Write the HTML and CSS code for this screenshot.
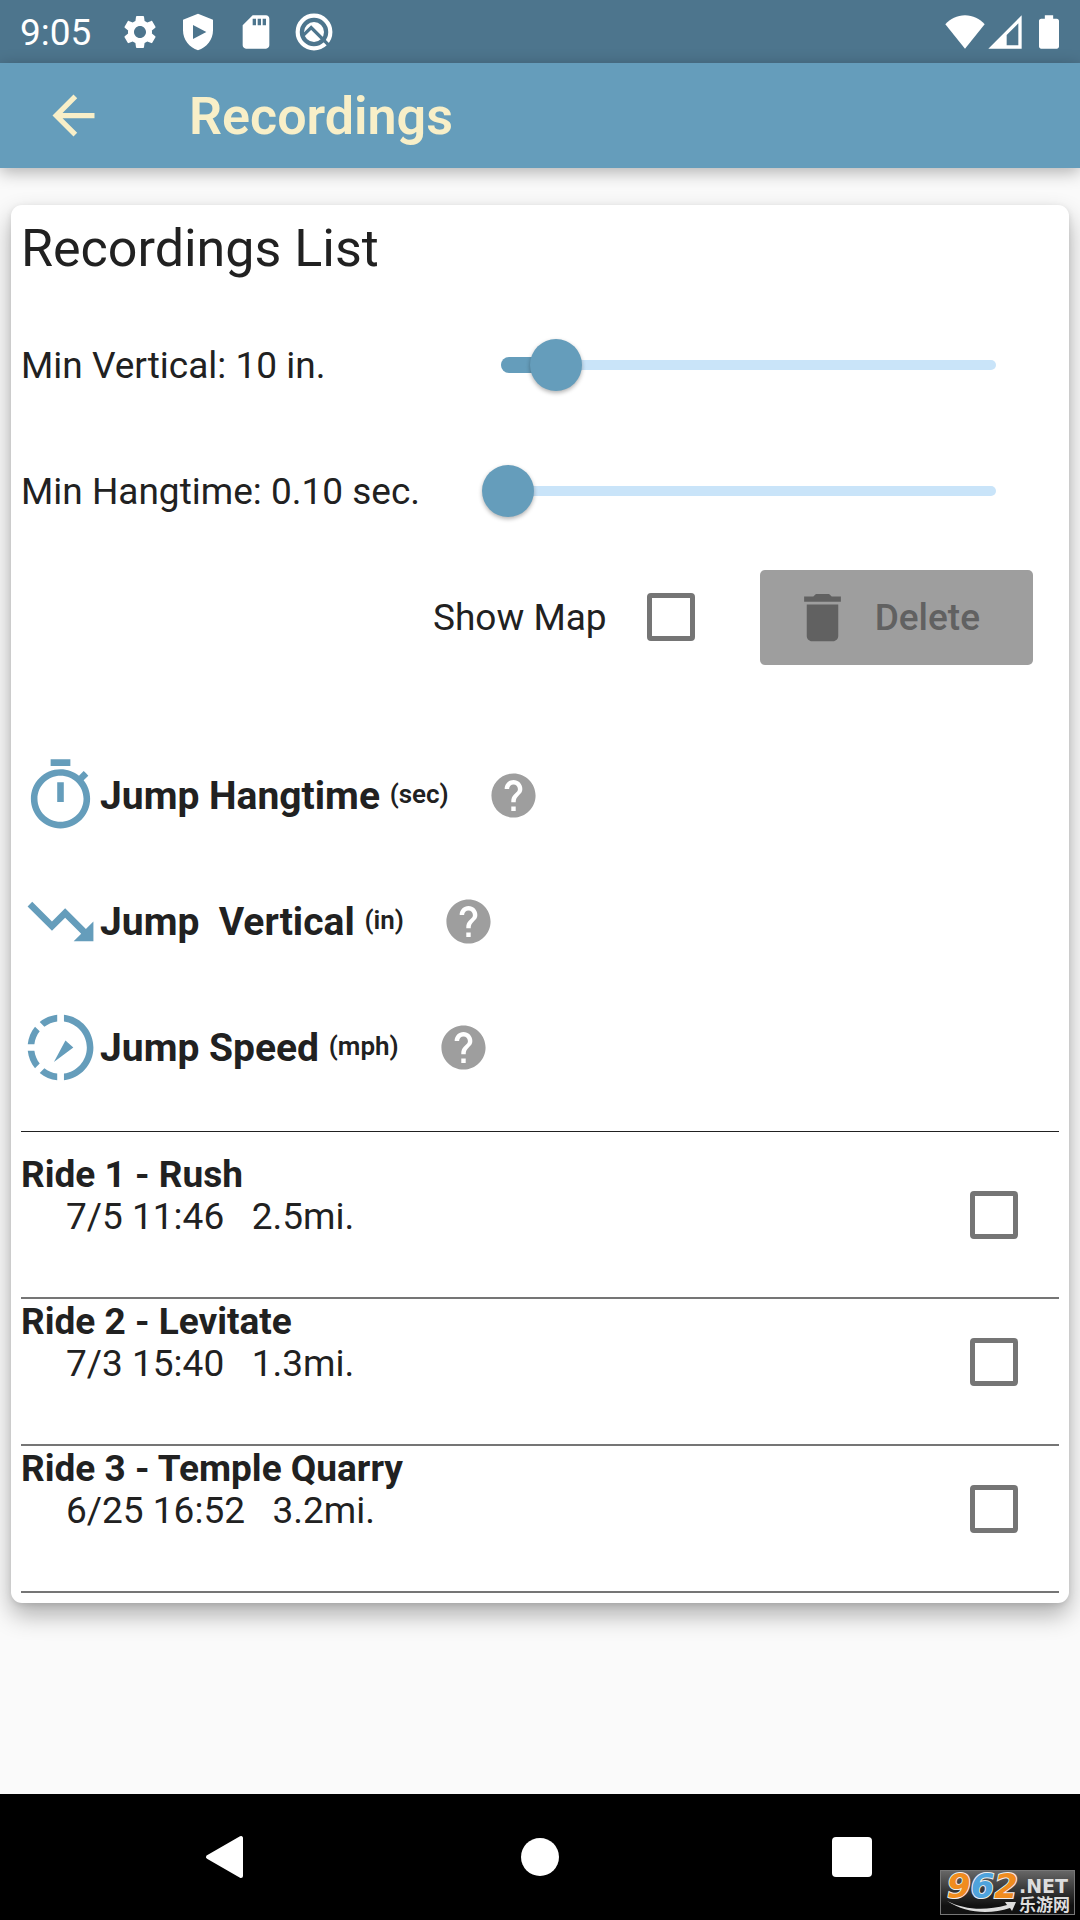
FILE: index.html
```html
<!DOCTYPE html>
<html lang="en">
<head>
    <meta charset="utf-8">
    <meta name="viewport" content="width=device-width, initial-scale=1">
    <title>Recordings</title>
    <link rel="stylesheet" href="styles.css">
</head>
<body>
    <div class="status-bar">
        <span class="clock">9:05</span>
        <div class="status-icons">
            <svg class="status-icon" viewBox="0 0 24 24"><path d="M19.14 12.94c.04-.3.06-.61.06-.94 0-.32-.02-.64-.07-.94l2.03-1.58c.18-.14.23-.41.12-.61l-1.92-3.32c-.12-.22-.37-.29-.59-.22l-2.39.96c-.5-.38-1.03-.7-1.62-.94l-.36-2.54c-.04-.24-.24-.41-.48-.41h-3.84c-.24 0-.43.17-.47.41l-.36 2.54c-.59.24-1.13.57-1.62.94l-2.39-.96c-.22-.08-.47 0-.59.22L2.74 8.87c-.12.21-.08.47.12.61l2.03 1.58c-.05.3-.09.63-.09.94s.02.64.07.94l-2.03 1.58c-.18.14-.23.41-.12.61l1.92 3.32c.12.22.37.29.59.22l2.39-.96c.5.38 1.03.7 1.62.94l.36 2.54c.05.24.24.41.48.41h3.84c.24 0 .44-.17.47-.41l.36-2.54c.59-.24 1.13-.56 1.62-.94l2.39.96c.22.08.47 0 .59-.22l1.92-3.32c.12-.22.07-.47-.12-.61l-2.01-1.58zM12 15.6c-1.98 0-3.6-1.62-3.6-3.6s1.62-3.6 3.6-3.6 3.6 1.62 3.6 3.6-1.62 3.6-3.6 3.6z"/></svg>
            <svg class="status-icon" viewBox="0 0 24 24"><path fill-rule="evenodd" d="M12 1L3 4.600V11c0 5.600 3.800 10.300 9 12 5.200-1.700 9-6.400 9-12V4.600zM9 7.800L17 12l-8 4.200z"/></svg>
            <svg class="status-icon" viewBox="0 0 24 24"><path d="M18 2h-8L4 8v12c0 1.100.9 2 2 2h12c1.100 0 2-.9 2-2V4c0-1.100-.9-2-2-2zm-6 6h-2V4h2v4zm3 0h-2V4h2v4zm3 0h-2V4h2v4z"/></svg>
            <svg class="status-icon" viewBox="0 0 24 24"><circle class="ring" cx="12" cy="12" r="9.800"/><circle cx="12" cy="12" r="6"/><path class="cut" d="M5.500 14l4.800-4.700L21 20"/></svg>
        </div>
        <div class="signal-icons">
            <svg class="status-icon" viewBox="0 0 24 24"><path d="M12 22L.2 7.400C3.200 4.100 7.200 2 12 2s8.800 2.100 11.800 5.400z"/></svg>
            <svg class="status-icon" viewBox="0 0 24 24"><path fill-rule="evenodd" d="M2 22L22 2v20zM13 20h7V6.800l-7 7z"/></svg>
            <svg class="status-icon battery" viewBox="0 0 24 24"><path d="M16.700 4H14.500V2h-5v2H7.300C6.600 4 6 4.600 6 5.330v15.330C6 21.400 6.600 22 7.300 22h9.400c.7 0 1.300-.6 1.300-1.330V5.330C18 4.600 17.400 4 16.700 4z"/></svg>
        </div>
    </div>

    <header class="app-bar">
        <button class="back-btn" aria-label="Back">
            <svg viewBox="0 0 24 24"><path d="M20 11H7.830l5.590-5.590L12 4l-8 8 8 8 1.410-1.410L7.830 13H20v-2z"/></svg>
        </button>
        <h1 class="title">Recordings</h1>
    </header>

    <main class="content">
        <section class="card">
            <h2 class="card-title">Recordings List</h2>

            <div class="slider-row">
                <label for="minVertical">Min Vertical: 10 in.</label>
                <div class="slider">
                    <div class="slider-track"></div>
                    <div class="slider-fill" style="width: 10%"></div>
                    <input type="range" id="minVertical" min="0" max="100" value="10">
                </div>
            </div>
            <div class="slider-row">
                <label for="minHangtime">Min Hangtime: 0.10 sec.</label>
                <div class="slider">
                    <div class="slider-track"></div>
                    <div class="slider-fill" style="width: 0%"></div>
                    <input type="range" id="minHangtime" min="0.1" max="5" step="0.1" value="0.1">
                </div>
            </div>

            <div class="actions">
                <label for="showMap">Show Map</label>
                <input type="checkbox" class="checkbox" id="showMap">
                <button class="delete-btn" disabled>
                    <svg viewBox="0 0 24 24"><path d="M6 19c0 1.100.9 2 2 2h8c1.100 0 2-.9 2-2V7H6v12zM19 4h-3.500l-1-1h-5l-1 1H5v2h14V4z"/></svg>
                    <span>Delete</span>
                </button>
            </div>

            <div class="legend">
                <div class="legend-row">
                    <svg class="legend-icon" viewBox="0 0 24 24"><path d="M15 1H9v2h6V1zm-4 13h2V8h-2v6zm8.030-6.610l1.420-1.420c-.43-.51-.9-.99-1.410-1.410l-1.420 1.420C16.070 4.740 14.120 4 12 4c-4.970 0-9 4.030-9 9s4.020 9 9 9 9-4.030 9-9c0-2.120-.74-4.070-1.970-5.610zM12 20c-3.870 0-7-3.130-7-7s3.130-7 7-7 7 3.130 7 7-3.130 7-7 7z"/></svg>
                    <span class="legend-name">Jump Hangtime <small>(sec)</small></span>
                    <button class="help-btn" aria-label="About hangtime">
                        <svg viewBox="0 0 24 24"><path d="M12 2C6.480 2 2 6.480 2 12s4.480 10 10 10 10-4.480 10-10S17.520 2 12 2zm1 17h-2v-2h2v2zm2.070-7.750l-.9.920C13.450 12.900 13 13.500 13 15h-2v-.5c0-1.100.45-2.100 1.170-2.830l1.240-1.260c.37-.36.59-.86.59-1.410 0-1.100-.9-2-2-2s-2 .9-2 2H8c0-2.210 1.790-4 4-4s4 1.790 4 4c0 .88-.36 1.680-.93 2.250z"/></svg>
                    </button>
                </div>
                <div class="legend-row">
                    <svg class="legend-icon" viewBox="0 0 24 24"><path d="M16 18l2.290-2.290-4.880-4.880-4 4L2 7.410 3.410 6l6 6 4-4 6.300 6.290L22 12v6z"/></svg>
                    <span class="legend-name">Jump  Vertical <small>(in)</small></span>
                    <button class="help-btn" aria-label="About vertical">
                        <svg viewBox="0 0 24 24"><path d="M12 2C6.480 2 2 6.480 2 12s4.480 10 10 10 10-4.480 10-10S17.520 2 12 2zm1 17h-2v-2h2v2zm2.070-7.750l-.9.920C13.450 12.900 13 13.500 13 15h-2v-.5c0-1.100.45-2.100 1.170-2.830l1.240-1.260c.37-.36.59-.86.59-1.410 0-1.100-.9-2-2-2s-2 .9-2 2H8c0-2.210 1.790-4 4-4s4 1.790 4 4c0 .88-.36 1.680-.93 2.250z"/></svg>
                    </button>
                </div>
                <div class="legend-row">
                    <svg class="legend-icon" viewBox="0 0 24 24"><path d="M11 4.070V2.050c-2.010.2-3.840 1-5.320 2.210L7.100 5.690c1.110-.86 2.440-1.440 3.900-1.620zM5.690 7.100L4.260 5.680C3.050 7.160 2.250 8.990 2.050 11h2.020c.18-1.460.76-2.790 1.620-3.900zM4.070 13H2.050c.2 2.010 1 3.840 2.210 5.320l1.430-1.430c-.86-1.100-1.440-2.430-1.620-3.890zm1.610 6.740C7.160 20.950 9 21.750 11 21.950v-2.020c-1.460-.18-2.790-.76-3.900-1.620l-1.420 1.430zM22 12c0 5.160-3.920 9.420-8.950 9.950v-2.020C16.970 19.410 20 16.050 20 12s-3.030-7.410-6.950-7.930V2.050C18.080 2.580 22 6.840 22 12zM13.500 9.900L15.900 12 10 16.400z"/></svg>
                    <span class="legend-name">Jump Speed <small>(mph)</small></span>
                    <button class="help-btn" aria-label="About speed">
                        <svg viewBox="0 0 24 24"><path d="M12 2C6.480 2 2 6.480 2 12s4.480 10 10 10 10-4.480 10-10S17.520 2 12 2zm1 17h-2v-2h2v2zm2.070-7.750l-.9.920C13.450 12.900 13 13.500 13 15h-2v-.5c0-1.100.45-2.100 1.170-2.830l1.240-1.260c.37-.36.59-.86.59-1.410 0-1.100-.9-2-2-2s-2 .9-2 2H8c0-2.210 1.790-4 4-4s4 1.790 4 4c0 .88-.36 1.680-.93 2.250z"/></svg>
                    </button>
                </div>
            </div>

            <div class="rides">
                <div class="ride">
                    <label for="ride1"><b>Ride 1 - Rush</b><span class="ride-info">7/5 11:46   2.5mi.</span></label>
                    <input type="checkbox" class="checkbox" id="ride1">
                </div>
                <div class="ride">
                    <label for="ride2"><b>Ride 2 - Levitate</b><span class="ride-info">7/3 15:40   1.3mi.</span></label>
                    <input type="checkbox" class="checkbox" id="ride2">
                </div>
                <div class="ride">
                    <label for="ride3"><b>Ride 3 - Temple Quarry</b><span class="ride-info">6/25 16:52   3.2mi.</span></label>
                    <input type="checkbox" class="checkbox" id="ride3">
                </div>
            </div>
        </section>
    </main>

    <nav class="nav-bar">
        <button class="nav-btn" aria-label="Back"><svg viewBox="0 0 44 44"><path stroke="currentColor" stroke-width="4" stroke-linejoin="round" d="M36 3v38L3 22z"/></svg></button>
        <button class="nav-btn" aria-label="Home"><svg viewBox="0 0 44 44"><circle cx="22" cy="22" r="19"/></svg></button>
        <button class="nav-btn" aria-label="Overview"><svg viewBox="0 0 44 44"><rect x="1" y="2" width="40" height="40" rx="4"/></svg></button>
        <div class="site-badge">
            <span class="badge-number">9<i>6</i>2</span>
            <span class="badge-net">.NET</span>
            <svg class="badge-swoosh" viewBox="0 0 70 13"><path d="M0 0c18 9 38 10 60 4l-2-3 11 0-4 9-2-3C42 14 18 12 0 0z"/></svg>
            <span class="badge-name">乐游网</span>
        </div>
    </nav>
</body>
</html>
```
FILE: styles.css
```css
* {
    box-sizing: border-box;
}
body {
    margin: 0;
    min-height: 100vh;
    display: flex;
    flex-direction: column;
    background: #fafafa;
    color: #212121;
    font-family: Roboto, "Noto Sans CJK SC", sans-serif;
    font-size: 37px;
    line-height: 42px;
}
button {
    border: none;
    padding: 0;
    background: none;
    font: inherit;
    cursor: pointer;
}
svg {
    display: block;
    fill: currentColor;
}

/* status bar */
.status-bar {
    display: flex;
    align-items: center;
    height: 63px;
    padding: 0 11px 0 20px;
    background: #4d758d;
    color: white;
}
.clock {
    width: 100px;
    padding-top: 2px;
}
.status-icons {
    display: flex;
    gap: 18px;
}
.signal-icons {
    display: flex;
    margin-left: auto;
}
.status-icon {
    width: 40px;
    height: 40px;
}
.battery {
    margin-left: 4px;
}
.ring {
    fill: none;
    stroke: currentColor;
    stroke-width: 2.5;
}
.cut {
    fill: none;
    stroke: #4d758d;
    stroke-width: 2;
}

/* app bar */
.app-bar {
    display: flex;
    align-items: center;
    gap: 84px;
    height: 105px;
    padding: 0 42px;
    background: #659dbb;
    color: #f8efc8;
    box-shadow: 0 4px 16px rgba(0,0,0,0.3);
}
.back-btn {
    color: inherit;
}
.back-btn svg,
.delete-btn svg {
    width: 63px;
    height: 63px;
}
.title {
    margin: 0;
    padding-top: 2px;
    font-size: 52px;
    font-weight: 600;
}

/* card */
.content {
    flex: 1;
    padding: 37px 11px;
}
.card {
    padding: 10px;
    background: white;
    border-radius: 11px;
    box-shadow: 0 12px 24px rgba(0,0,0,0.3), 0 2px 6px rgba(0,0,0,0.1);
}
.card-title {
    margin: 0;
    padding-top: 2px;
    font-size: 52px;
    font-weight: 400;
    line-height: 64px;
}
.slider-row {
    display: grid;
    grid-template-columns: 461px 1fr;
    align-items: center;
    height: 126px;
    padding-right: 44px;
}
.slider-row label,
.actions label,
.delete-btn span {
    padding-top: 2px;
}
.card-title + .slider-row {
    margin-top: 21px;
}
.slider {
    display: grid;
    align-items: center;
    padding: 0 19px;
}
.slider > * {
    grid-area: 1 / 1;
}
.slider-track {
    height: 10px;
    border-radius: 5px;
    background: #c9e4f9;
}
.slider-fill {
    height: 16px;
    border-radius: 8px;
    background: #659dbb;
}
.slider input {
    appearance: none;
    height: 52px;
    margin: 0 -19px;
    background: transparent;
}
.slider input::-webkit-slider-thumb {
    appearance: none;
    width: 52px;
    height: 52px;
    border-radius: 50%;
    background: #659dbb;
    box-shadow: 0 2px 4px rgba(0,0,0,0.3);
}
.checkbox {
    appearance: none;
    width: 48px;
    height: 48px;
    margin: 0;
    border: 5px solid #757575;
    border-radius: 4px;
}
.checkbox:checked {
    background: #659dbb;
}
.actions {
    display: flex;
    align-items: center;
    justify-content: flex-end;
    height: 126px;
    padding-right: 26px;
}
.actions .checkbox {
    margin: 0 65px 0 40px;
}
.delete-btn {
    display: flex;
    align-items: center;
    gap: 21px;
    height: 95px;
    padding: 0 53px 0 31px;
    border-radius: 5px;
    background: #9e9e9e;
    color: #616161;
    font-weight: 500;
}

/* legend */
.legend {
    margin-top: 52px;
    padding-bottom: 21px;
    border-bottom: 1px solid #212121;
}
.legend-row {
    display: flex;
    align-items: center;
    height: 126px;
}
.legend-icon {
    width: 79px;
    height: 79px;
    color: #659dbb;
}
.legend-name {
    white-space: pre;
    font-size: 39px;
    font-weight: 700;
}
.legend-name small {
    font-size: 26px;
    font-weight: 600;
    vertical-align: 6px;
}
.help-btn {
    margin-left: 38px;
    color: #9e9e9e;
}
.help-btn svg {
    width: 53px;
    height: 53px;
}

/* rides */
.rides {
    padding-top: 20px;
}
.ride {
    display: flex;
    justify-content: space-between;
    height: 147px;
    padding: 2px 41px 0 0;
    border-bottom: 2px solid #757575;
}
.ride b {
    display: block;
}
.ride-info {
    display: block;
    padding-left: 45px;
    white-space: pre;
}
.ride .checkbox {
    margin-top: 37px;
}

/* navigation bar */
.nav-bar {
    position: relative;
    display: grid;
    grid-template-columns: repeat(3, 1fr);
    align-items: center;
    justify-items: center;
    height: 126px;
    padding: 0 70px;
    background: black;
}
.nav-btn {
    color: white;
}
.nav-btn svg {
    width: 44px;
    height: 44px;
}
.site-badge {
    position: absolute;
    right: 5px;
    bottom: 5px;
    display: grid;
    grid-template-columns: 78px 1fr;
    grid-template-rows: 26px 17px;
    width: 135px;
    height: 45px;
    border: 1px solid #777;
    background: linear-gradient(#666, #111 80%);
    color: #ddd;
    font-family: "DejaVu Sans", "Noto Sans CJK SC", sans-serif;
    font-weight: 700;
    line-height: 17px;
}
.badge-number {
    padding-left: 6px;
    color: #f08c1e;
    font-size: 34px;
    font-style: italic;
    line-height: 31px;
    -webkit-text-stroke: 2px #eee;
    paint-order: stroke fill;
}
.badge-number i {
    color: #4fa3dc;
}
.badge-net {
    padding-top: 7px;
    font-size: 19px;
}
.badge-swoosh {
    width: 70px;
    height: 13px;
    margin: 4px 0 0 6px;
}
.badge-name {
    font-size: 17px;
}
```
